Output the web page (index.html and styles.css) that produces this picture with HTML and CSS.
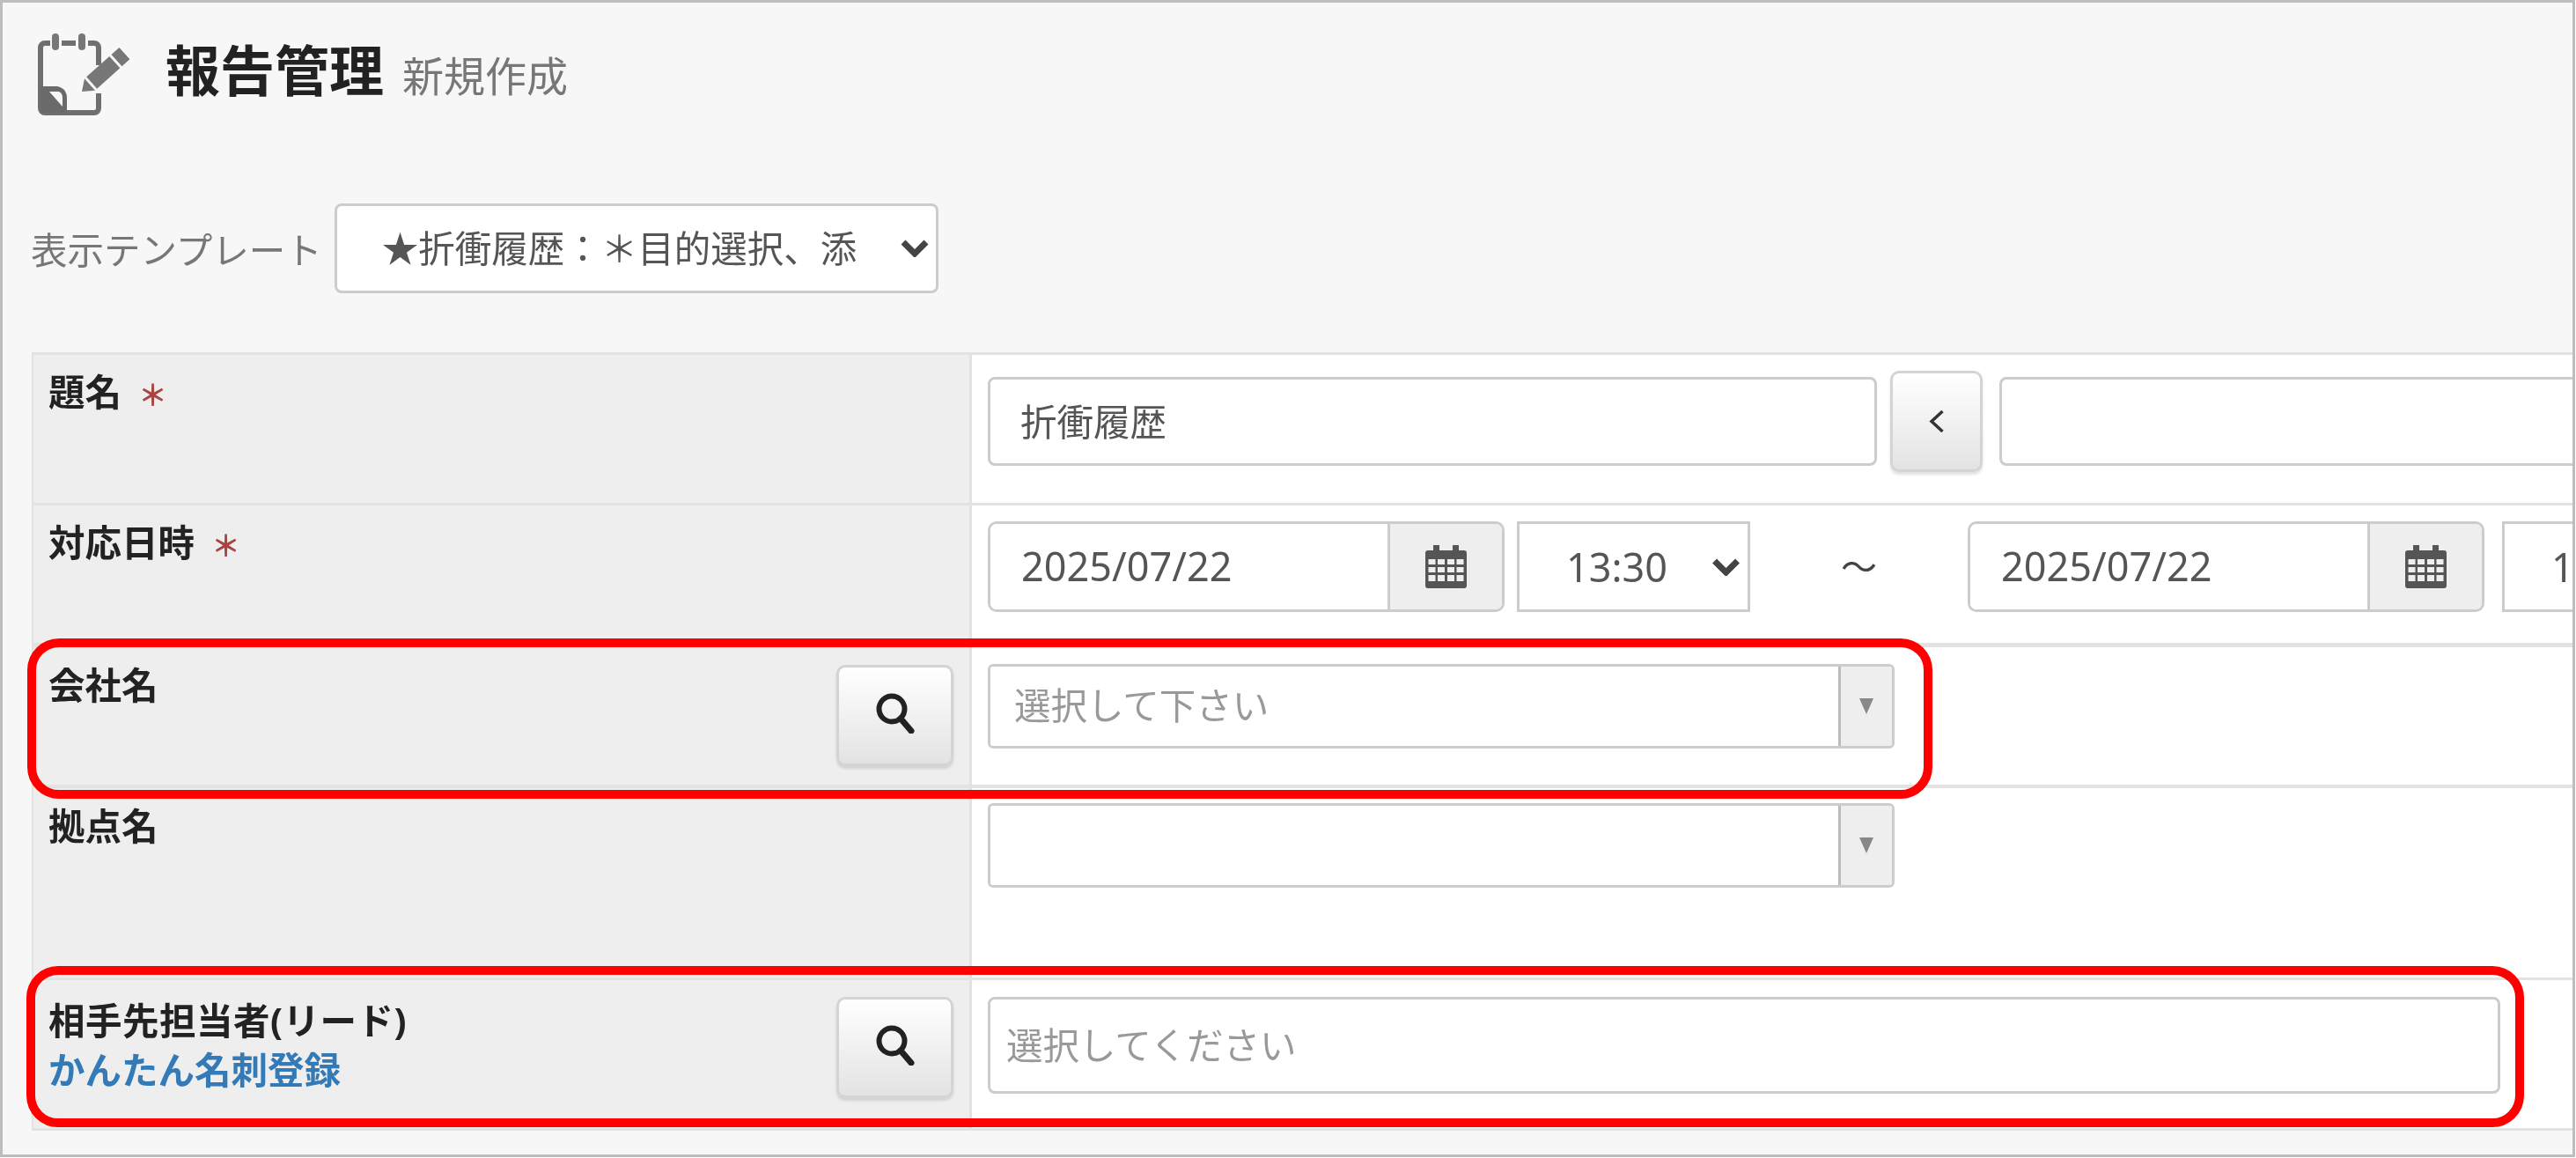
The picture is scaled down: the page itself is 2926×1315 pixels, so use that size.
FILE: index.html
```
<!DOCTYPE html>
<html lang="ja">
<head>
<meta charset="utf-8">
<title>報告管理 新規作成</title>
<link rel="stylesheet" href="styles.css">
</head>
<body>
<main class="frame">
  <header class="page-head">
    <svg class="head-icon" viewBox="0 0 105 94" aria-hidden="true">
      <g fill="none" stroke="#6f6f6f" stroke-width="6">
        <path d="M14 11H8a5 5 0 0 0-5 5V85a5 5 0 0 0 5 5H64a5 5 0 0 0 5-5V68"/>
        <path d="M27 11H43"/>
        <path d="M57 11H64a5 5 0 0 1 5 5V36"/>
      </g>
      <g fill="#777">
        <rect x="16" y="0" width="8" height="19" rx="4"/>
        <rect x="46" y="0" width="8" height="19" rx="4"/>
        <path d="M3 60H22Q33 62 33 74V90H8Q3 90 3 85Z" fill="#6a6a6a"/>
        <path d="M13 66H24Q28 68 28 73V83Z" fill="#f7f7f7"/>
        <path d="M50 66L53 51.3L65 64.7Z"/>
        <path d="M55.2 49.3L67.2 62.7L93.3 39.3L81.3 25.9Z"/>
        <path d="M83.5 23.9L95.5 37.3L104.4 29.3L92.4 15.9Z"/>
      </g>
    </svg>
    <h1 class="page-title">報告管理<small class="page-sub">新規作成</small></h1>
  </header>

  <div class="template-row">
    <label class="template-label" for="tpl">表示テンプレート</label>
    <select class="select template-select" id="tpl">
      <option>★折衝履歴：＊目的選択、添付ファイル</option>
    </select>
  </div>

  <form class="form">
    <div class="row row-title">
      <div class="label-cell"><span class="label">題名<span class="req">＊</span></span></div>
      <div class="value-cell">
        <input class="input title-input" type="text" value="折衝履歴">
        <button class="btn btn-arrow" type="button" aria-label="戻す">
          <svg class="arrow-icon" viewBox="0 0 18 27"><path d="M15.5 2L3 13.500L15.500 25" fill="none" stroke="#333" stroke-width="3.500"/></svg>
        </button>
        <input class="input side-input" type="text">
      </div>
    </div>

    <div class="row row-date">
      <div class="label-cell"><span class="label">対応日時<span class="req">＊</span></span></div>
      <div class="value-cell">
        <div class="date-group">
          <input class="date-input" type="text" value="2025/07/22">
          <span class="date-addon">
            <svg class="cal-icon" viewBox="0 0 47 49" aria-hidden="true">
              <path fill="#555" d="M3 6H9V1.500a3 3 0 0 1 7 0V6H31V1.500a3 3 0 0 1 7 0V6H44a3 3 0 0 1 3 3V46a3 3 0 0 1-3 3H3a3 3 0 0 1-3-3V9a3 3 0 0 1 3-3Z"/>
              <path fill="#eee" d="M3.500 16h8v6h-8zM14 16h8v6h-8zM25 16h8v6h-8zM35.500 16h8v6h-8zM3.500 25h8v6h-8zM14 25h8v6h-8zM25 25h8v6h-8zM35.500 25h8v6h-8zM3.500 34h8v7h-8zM14 34h8v7h-8zM25 34h8v7h-8zM35.500 34h8v7h-8z"/>
            </svg>
          </span>
        </div>
        <select class="select time-select"><option>13:30</option></select>
        <span class="tilde">～</span>
        <div class="date-group">
          <input class="date-input" type="text" value="2025/07/22">
          <span class="date-addon">
            <svg class="cal-icon" viewBox="0 0 47 49" aria-hidden="true">
              <path fill="#555" d="M3 6H9V1.500a3 3 0 0 1 7 0V6H31V1.500a3 3 0 0 1 7 0V6H44a3 3 0 0 1 3 3V46a3 3 0 0 1-3 3H3a3 3 0 0 1-3-3V9a3 3 0 0 1 3-3Z"/>
              <path fill="#eee" d="M3.500 16h8v6h-8zM14 16h8v6h-8zM25 16h8v6h-8zM35.500 16h8v6h-8zM3.500 25h8v6h-8zM14 25h8v6h-8zM25 25h8v6h-8zM35.500 25h8v6h-8zM3.500 34h8v7h-8zM14 34h8v7h-8zM25 34h8v7h-8zM35.500 34h8v7h-8z"/>
            </svg>
          </span>
        </div>
        <select class="select time-select time-end"><option>14:30</option></select>
      </div>
    </div>

    <div class="row row-company">
      <div class="label-cell">
        <span class="label">会社名</span>
        <button class="btn btn-search" type="button" aria-label="検索">
          <svg class="search-icon" viewBox="0 0 44 46"><circle cx="18" cy="18" r="14.500" fill="none" stroke="#222" stroke-width="6"/><path d="M28 29L40 43" fill="none" stroke="#222" stroke-width="7" stroke-linecap="round"/></svg>
        </button>
      </div>
      <div class="value-cell">
        <div class="combo">
          <input class="combo-input" type="text" placeholder="選択して下さい">
          <span class="combo-addon"><span class="combo-arrow"></span></span>
        </div>
      </div>
    </div>

    <div class="row row-branch">
      <div class="label-cell"><span class="label">拠点名</span></div>
      <div class="value-cell">
        <div class="combo">
          <input class="combo-input" type="text">
          <span class="combo-addon"><span class="combo-arrow"></span></span>
        </div>
      </div>
    </div>

    <div class="row row-contact">
      <div class="label-cell">
        <div class="label-stack">
          <span class="label label-wide">相手先担当者(リード)</span>
          <a class="label-link" href="#">かんたん名刺登録</a>
        </div>
        <button class="btn btn-search" type="button" aria-label="検索">
          <svg class="search-icon" viewBox="0 0 44 46"><circle cx="18" cy="18" r="14.500" fill="none" stroke="#222" stroke-width="6"/><path d="M28 29L40 43" fill="none" stroke="#222" stroke-width="7" stroke-linecap="round"/></svg>
        </button>
      </div>
      <div class="value-cell">
        <input class="input contact-input" type="text" placeholder="選択してください">
      </div>
    </div>
  </form>

  <div class="callout callout-company"></div>
  <div class="callout callout-contact"></div>
</main>
</body>
</html>
```

FILE: styles.css
```
* { box-sizing: border-box; }

html, body {
  margin: 0;
  padding: 0;
  background: #fff;
}

body, input, select, button {
  font-family: "Noto Sans", "Noto Sans CJK JP", sans-serif;
}

.frame {
  position: relative;
  width: 2925px;
  height: 1314px;
  border: 3px solid #bdbdbd;
  background: #f7f7f7;
  overflow: hidden;
}

/* the reference is an upscaled capture, so its content is slightly soft */
.page-head,
.template-row,
.form {
  filter: blur(.6px);
}

/* header */
.page-head {
  display: flex;
  align-items: flex-start;
  gap: 40px;
  height: 94px;
  margin-top: 35px;
  padding-left: 40px;
}

.head-icon {
  width: 105px;
  height: 94px;
  flex: none;
}

.page-title {
  margin: 0;
  padding-top: 4px;
  font-size: 62px;
  line-height: 76px;
  font-weight: 700;
  color: #222;
  white-space: nowrap;
}

.page-sub {
  margin-left: 21px;
  font-size: 47px;
  font-weight: 400;
  color: #777;
}

/* template selector */
.template-row {
  display: flex;
  align-items: center;
  gap: 14px;
  margin-top: 99px;
  padding-left: 32px;
}

.template-label {
  font-size: 41.5px;
  color: #777;
}

.select {
  appearance: none;
  border: 3px solid #ccc;
  background-color: #fff;
  background-repeat: no-repeat;
  color: #555;
  background-image: url("data:image/svg+xml,%3Csvg xmlns='http://www.w3.org/2000/svg' viewBox='0 0 32 20'%3E%3Cpath d='M3 3L16 16L29 3' fill='none' stroke='%23444' stroke-width='7'/%3E%3C/svg%3E");
}

.template-select {
  width: 686px;
  height: 102px;
  padding: 0 89px 0 51px;
  border-radius: 8px;
  font-size: 41.5px;
  background-position: 640px center;
  background-size: 32px 20px;
}

/* form table */
.form {
  margin-top: 67px;
  margin-left: 33px;
  border-top: 3px solid #e2e2e2;
  background: #fff;
}

.row {
  display: grid;
  grid-template-columns: 1068px 1fr;
  border-bottom: 3px solid #e2e2e2;
}

.row-title { height: 171px; }
.row-date { height: 161px; border-bottom-width: 5px; }
.row-company { height: 160px; border-bottom-width: 4px; }
.row-branch { height: 218px; }
.row-contact { height: 171px; }

.label-cell {
  display: flex;
  justify-content: space-between;
  align-items: flex-start;
  padding: 14px 18px 0 17px;
  background: #eee;
  border-left: 2px solid #e2e2e2;
  border-right: 3px solid #e2e2e2;
}

.label {
  font-size: 41.5px;
  line-height: 56px;
  font-weight: 700;
  color: #222;
  white-space: nowrap;
}

.label-wide { letter-spacing: .5px; }

.req {
  margin-left: 19px;
  font-size: 33px;
  color: #a94442;
}

.label-stack {
  display: flex;
  flex-direction: column;
  padding-top: 4px;
}

.label-link {
  font-size: 41.5px;
  line-height: 56px;
  font-weight: 700;
  color: #337ab7;
  text-decoration: none;
}

.value-cell {
  display: flex;
  align-items: flex-start;
  padding-left: 18px;
  overflow: hidden;
  min-width: 0;
}

.row-title .value-cell { padding-top: 25px; }
.row-date .value-cell { padding-top: 18px; }
.row-company .value-cell { padding-top: 19px; }
.row-branch .value-cell { padding-top: 17px; }
.row-contact .value-cell { padding-top: 19px; }

.row-company .label-cell,
.row-branch .label-cell { padding-top: 15px; }

.btn {
  display: flex;
  align-items: center;
  justify-content: center;
  flex: none;
  padding: 0;
  border: 3px solid #d4d4d4;
  border-radius: 10px;
  background: linear-gradient(#fff, #e3e3e3);
  box-shadow: 0 3px 3px rgba(0, 0, 0, .12);
}

.btn-search {
  width: 133px;
  height: 115px;
  margin-top: 5px;
  padding-bottom: 5px;
}

.search-icon { width: 44px; height: 46px; }

.btn-arrow {
  width: 105px;
  height: 115px;
  margin: -7px 19px 0 15px;
}

.arrow-icon { width: 18px; height: 27px; }

.input {
  height: 101px;
  padding: 0 34px 3px;
  border: 3px solid #ccc;
  border-radius: 8px;
  background: #fff;
  font-size: 41.5px;
  color: #555;
}

.input::placeholder,
.combo-input::placeholder {
  color: #999;
  opacity: 1;
}

.title-input { width: 1010px; flex: none; }
.side-input { width: 800px; flex: none; }

.contact-input {
  width: 1718px;
  height: 110px;
  flex: none;
  padding: 0 18px;
}

.date-group {
  display: flex;
  flex: none;
  width: 587px;
  height: 103px;
  border: 3px solid #ccc;
  border-radius: 10px;
  overflow: hidden;
}

.date-input {
  flex: 1;
  min-width: 0;
  border: 0;
  padding: 0 0 3px 35px;
  font-size: 45px;
  color: #555;
  background: #fff;
}

.date-addon {
  display: flex;
  align-items: center;
  justify-content: center;
  flex: none;
  width: 130px;
  border-left: 3px solid #ccc;
  background: #eee;
}

.cal-icon { width: 47px; height: 49px; }

.time-select {
  flex: none;
  width: 265px;
  height: 103px;
  margin-left: 14px;
  padding: 0 0 0 53px;
  font-size: 45px;
  border-radius: 0;
  background-position: 218px center;
  background-size: 33px 20px;
}

.time-end { margin-left: 20px; }

.tilde {
  flex: none;
  width: 247px;
  height: 103px;
  line-height: 103px;
  text-align: center;
  font-size: 41px;
  color: #444;
}

.combo {
  display: flex;
  flex: none;
  width: 1030px;
  height: 96px;
  border: 3px solid #ccc;
  border-radius: 6px;
  overflow: hidden;
}

.combo-input {
  flex: 1;
  min-width: 0;
  border: 0;
  padding: 0 0 3px 27px;
  font-size: 41.5px;
  color: #555;
  background: #fff;
}

.combo-addon {
  display: flex;
  align-items: center;
  justify-content: center;
  flex: none;
  width: 61px;
  border-left: 3px solid #bbb;
  background: #eee;
}

.combo-arrow {
  width: 0;
  height: 0;
  border-left: 8px solid transparent;
  border-right: 8px solid transparent;
  border-top: 18px solid #888;
}

/* red annotation boxes drawn over the form */
.callout {
  position: absolute;
  border: 10px solid #f00;
  border-radius: 36px;
  pointer-events: none;
}

.callout-company {
  left: 28px;
  top: 722px;
  width: 2164px;
  height: 182px;
}

.callout-contact {
  left: 27px;
  top: 1094px;
  width: 2837px;
  height: 183px;
}
```
